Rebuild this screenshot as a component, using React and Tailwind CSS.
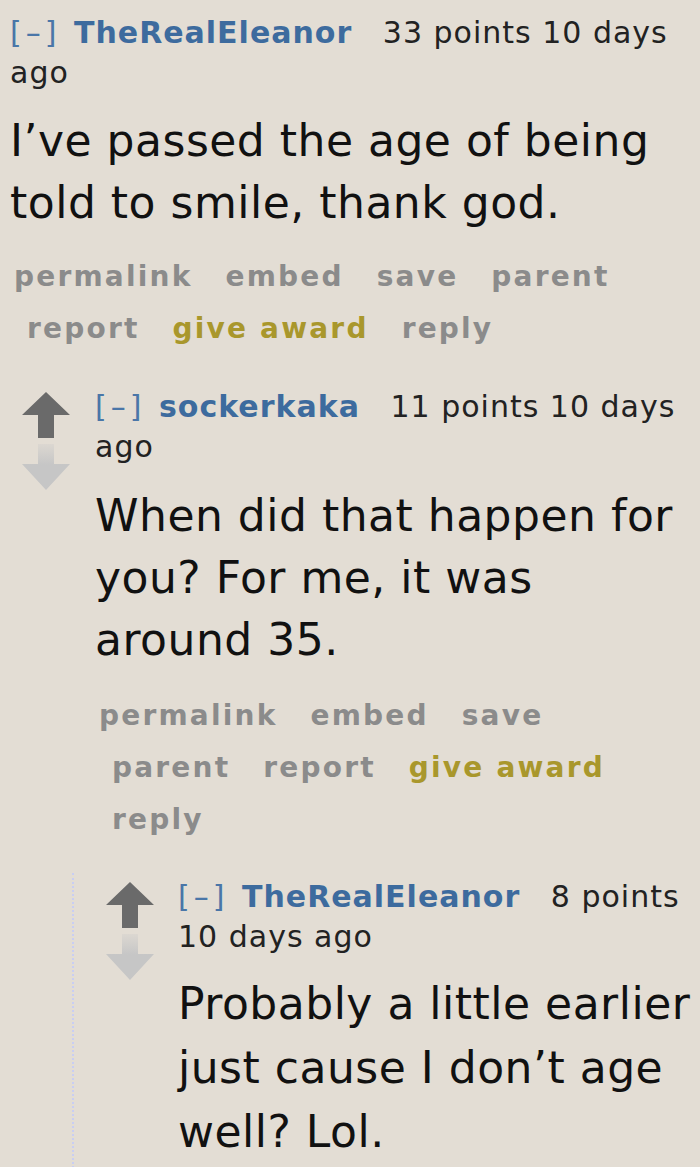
import React from 'react';

const font = "font-['DejaVu_Sans',Verdana,sans-serif]";

function UpArrow() {
  return (
    <svg width="48" height="46" viewBox="0 0 48 46" className="block">
      <polygon points="24,0 48,23 32,23 32,46 16,46 16,23 0,23" fill="#6a6a6a" />
    </svg>
  );
}

function DownArrow({ id }) {
  return (
    <svg width="48" height="46" viewBox="0 0 48 46" className="block">
      <defs>
        <linearGradient id={id} x1="0" y1="0" x2="0" y2="1">
          <stop offset="0" stopColor="#c6c6c6" stopOpacity="0.25" />
          <stop offset="0.45" stopColor="#c6c6c6" />
          <stop offset="1" stopColor="#c6c6c6" />
        </linearGradient>
      </defs>
      <polygon points="16,0 32,0 32,20 48,20 24,46 0,20 16,20" fill={`url(#${id})`} />
    </svg>
  );
}

function Tagline({ author, points }) {
  return (
    <p className="text-[30px] leading-[40px] tracking-[1px] text-[#222]">
      <span className="text-[#4a76a8] tracking-[4px] mr-[3px]">[–]</span>{' '}
      <span className="font-bold text-[#3d6b9e] mr-[20px]">{author}</span>{' '}
      {points} 10 days ago
    </p>
  );
}

function Actions({ items }) {
  return (
    <ul className="flex flex-wrap text-[28px] leading-[52px] tracking-[2.2px] font-bold">
      {items.map((it, i) => (
        <li
          key={it}
          className={`${i === 0 ? 'pl-[4px]' : 'pl-[17px]'} pr-[16px] ${it === 'give award' ? 'text-[#a9972c]' : 'text-[#8b8b8b]'}`}
        >
          {it}
        </li>
      ))}
    </ul>
  );
}

const links = ['permalink', 'embed', 'save', 'parent', 'report', 'give award', 'reply'];

export default function App() {
  return (
    <div className={`${font} w-[700px] min-h-[1167px] bg-[#e3ddd4] pl-[10px] pr-[4px] pt-[13px] overflow-hidden`}>
      {/* top comment (arrows cropped out) */}
      <div>
        <Tagline author="TheRealEleanor" points="33 points" />
        <p className="mt-[17px] text-[44px] leading-[62px] tracking-[0.5px] text-[#111]">
          I’ve passed the age of being told to smile, thank god.
        </p>
        <div className="mt-[17px]">
          <Actions items={links} />
        </div>

        {/* child comment */}
        <div className="mt-[32px] ml-[12px]">
          <div className="flex">
            <div className="w-[48px] shrink-0 pt-[5px] flex flex-col gap-[6px]">
              <UpArrow />
              <DownArrow id="d1" />
            </div>
            <div className="ml-[25px] flex-1 min-w-0">
              <Tagline author="sockerkaka" points="11 points" />
              <p className="mt-[18px] text-[44px] leading-[62px] tracking-[0.5px] text-[#111]">
                When did that happen for you? For me, it was around 35.
              </p>
              <div className="mt-[19px]">
                <Actions items={links} />
              </div>
            </div>
          </div>

          {/* grandchild */}
          <div className="mt-[27px] ml-[50px] border-l-2 border-dotted border-[#c9cef2] pl-[32px] pt-[4px] pb-[40px]">
            <div className="flex">
              <div className="w-[48px] shrink-0 pt-[5px] flex flex-col gap-[6px]">
                <UpArrow />
                <DownArrow id="d2" />
              </div>
              <div className="ml-[24px] flex-1 min-w-0">
                <Tagline author="TheRealEleanor" points="8 points" />
                <p className="mt-[15px] text-[44px] leading-[64px] tracking-[0.5px] text-[#111]">
                  Probably a little earlier just cause I don’t age well? Lol.
                </p>
              </div>
            </div>
          </div>
        </div>
      </div>
    </div>
  );
}
